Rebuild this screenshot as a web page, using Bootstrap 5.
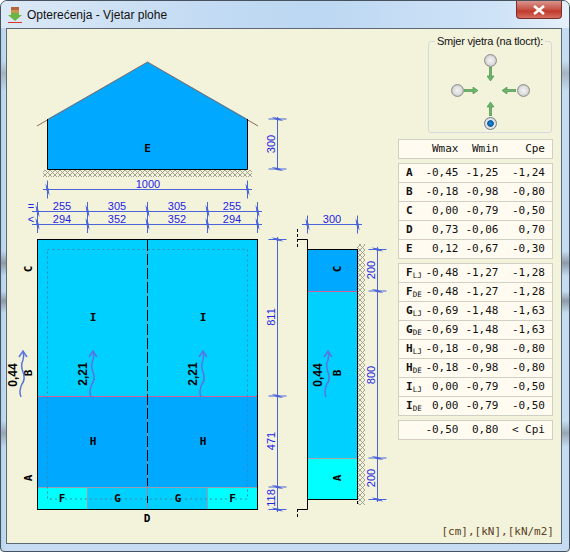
<!DOCTYPE html>
<html lang="hr">

<head>
  <meta charset="UTF-8">
  <meta name="viewport" content="width=device-width, initial-scale=1.0">
  <title>Opterećenja - Vjetar plohe</title>
  <link href="https://cdn.jsdelivr.net/npm/bootstrap@5.3.0/dist/css/bootstrap.min.css" rel="stylesheet">
  <style>
    html, body {
      margin: 0;
      height: 552px;
      overflow: hidden;
      background-color: #fff;
    }

    .prozor {
      width: 570px;
      height: 552px;
      border: 1px solid #47525e;
      border-radius: 7px 7px 4px 4px;
      background:
        linear-gradient(180deg, transparent 60px, #a6b4c2 72px, transparent 90px, transparent 250px, #8e9aa8 262px, transparent 275px, transparent 290px, #8e9aa8 300px, transparent 312px, transparent 420px, #98a6b4 432px, transparent 446px),
        linear-gradient(90deg, #b4d2ee 0, #c5dcf2 5px, #c5dcf2 100%);
      overflow: hidden;
    }

    .naslov {
      height: 27px;
      background: linear-gradient(90deg, #dce9f6 0, #c3dbf3 35%, #bcd7f2 55%, #cfe3f7 88%, #e6f0fa 100%);
      font: 12px "Liberation Sans", Arial, sans-serif;
      color: #111;
      padding-left: 6px;
    }

    .zatvori {
      width: 46px;
      height: 18px;
      margin-right: 7px;
      border: 1px solid #7a2d28;
      border-top: 0;
      border-radius: 0 0 4px 4px;
      background: linear-gradient(180deg, #d9958c 0, #c8584c 45%, #c13a2c 60%, #d56f60 100%);
    }

    .klijent {
      margin: 0 7px 0 5px;
      height: 516px;
      border: 1px solid #5c6873;
      background-color: #f3f3dc;
    }

    .crtez {
      display: block;
      width: 390px;
      height: 514px;
      flex: none;
    }

    .crtez text {
      font-family: "Liberation Sans", Arial, sans-serif;
    }

    .crtez .kota {
      font-size: 11px;
      fill: #2323e6;
      text-anchor: middle;
    }

    .crtez .slovo {
      font-family: "DejaVu Sans Mono", monospace;
      font-weight: 700;
      font-size: 11px;
      fill: #000;
      text-anchor: middle;
    }

    .crtez .sila {
      font-weight: 700;
      font-size: 12px;
      fill: #000;
      text-anchor: middle;
    }

    .strana {
      width: 154px;
      margin-left: 1px;
      padding: 5px 0 4px;
    }

    .smjer {
      width: 124px;
      height: 99px;
      margin: 0 0 6px 30px;
      padding: 0;
      border: 1px solid #d3d9dd;
      border-radius: 3px;
    }

    .smjer legend {
      float: none;
      width: auto;
      margin: 0 auto;
      padding: 0 2px;
      font: 11px/14px "Liberation Sans", Arial, sans-serif;
      letter-spacing: -0.2px;
      white-space: nowrap;
      color: #111;
    }

    .ruza {
      display: grid;
      grid-template-columns: 13px 16px 3px 15px 3px 16px 13px;
      grid-template-rows: 13px 15px 2px 13px 2px 18px 13px;
      place-items: center;
      width: 79px;
      margin: 0 auto;
      padding-top: 6px;
    }

    .ruza .form-check-input {
      width: 13px;
      height: 13px;
      margin: 0;
      float: none;
      border: 1px solid #8f8f8f;
      background: radial-gradient(circle, #f4f4f4 0, #dcdcdc 55%, #c4c4c4 70%, #fff 100%);
      box-shadow: none;
    }

    .ruza .form-check-input:checked {
      border-color: #6f7f8a;
      background: radial-gradient(circle, #1b8fe0 0, #0a5a9e 38%, #e8e8e8 48%, #c8c8c8 100%);
    }

    .ruza svg {
      display: block;
    }

    .tablica {
      --bs-table-bg: #fffbf0;
      --bs-table-color: #111;
      table-layout: fixed;
      width: 154px;
      margin: 0 0 4px;
      border: 1px solid #cfcfc4;
      font: 11px/14px "DejaVu Sans Mono", monospace;
    }

    .tablica td {
      height: 19px;
      padding: 0;
      border-bottom: 1px solid #cfcfc4;
      text-align: right;
      vertical-align: middle;
    }

    .tablica td:first-child {
      width: 26px;
      padding-left: 7px;
      text-align: left;
      font-weight: 700;
      white-space: nowrap;
    }

    .tablica td:nth-child(2) {
      width: 34px;
    }

    .tablica td:nth-child(3) {
      width: 40px;
    }

    .tablica td:nth-child(4) {
      width: 54px;
      padding-right: 7px;
    }

    .tablica sub {
      font-size: 7.5px;
      font-weight: 400;
      bottom: -0.2em;
      letter-spacing: 0;
    }

    .jedinice {
      margin-right: -2px;
      font: 11px/14px "DejaVu Sans Mono", monospace;
      color: #5a4020;
      text-align: right;
    }
  </style>
</head>

<body>

  <div class="prozor d-flex flex-column">
    <div class="naslov d-flex align-items-center flex-none">
      <svg width="16" height="18" viewBox="0 0 16 18" class="me-1">
        <rect x="4" y="1" width="8" height="3" fill="#b5653c"/>
        <rect x="4" y="4" width="8" height="3" fill="#c79a4a"/>
        <path d="M4 7h8v2h3l-7 6-7-6h3z" fill="#6cb544"/>
        <rect x="1" y="16" width="14" height="1" fill="#d8352a"/>
      </svg>
      <span>Opterećenja - Vjetar plohe</span>
      <div class="zatvori ms-auto d-flex align-items-center justify-content-center align-self-start">
        <svg width="14" height="10" viewBox="0 0 14 10">
          <path d="M2 1l10 8M12 1L2 9" stroke="#fff" stroke-width="2.6" fill="none"/>
        </svg>
      </div>
    </div>

    <div class="klijent d-flex">
      <svg class="crtez" viewBox="7 29 390 514">
        <defs>
          <pattern id="srafura" width="5" height="5" patternUnits="userSpaceOnUse">
            <rect width="5" height="5" fill="#f3f3dc"/>
            <path d="M0 0l2.500 2.500 2.500-2.500M0 5l2.500-2.500 2.500 2.500" stroke="#8d8d80" stroke-width="0.8" fill="none"/>
          </pattern>
          <g id="crtV">
            <path d="M-9 0H9" stroke="#4a63d8" stroke-width="1"/>
            <path d="M-6 -2L1 -1 6 2 -1 1z" fill="#4a63d8"/>
          </g>
          <g id="crtH">
            <path d="M0 -9V9" stroke="#4a63d8" stroke-width="1"/>
            <path d="M-2 -6L-1 1 2 6 1 -1z" fill="#4a63d8"/>
          </g>
          <g id="val">
            <path d="M0 0c-2 -5 -1 -9 1 -13c3 -4 3 -7 1 -12c-2 -5 -2 -8 0 -12c1 -3 1 -5 0 -9" fill="none" stroke="#5a74de" stroke-width="1.5"/>
            <path d="M-2 -40L2 -46 6 -40" fill="none" stroke="#5a74de" stroke-width="1.5"/>
          </g>
        </defs>

        <!-- presjek -->
        <path d="M47.5 119L147.5 62 247.5 119V169.500H47.500z" fill="#00a8ff"/>
        <path d="M37 126L147.500 62 258 126" fill="none" stroke="#8a6a60" stroke-width="1"/>
        <path d="M47.500 119V169.500H247.500V119" fill="none" stroke="#000" stroke-width="1"/>
        <rect x="43" y="170" width="209" height="7" fill="url(#srafura)"/>
        <text class="slovo" x="147.500" y="152">E</text>

        <path d="M277.500 117V170" stroke="#4a63d8"/>
        <use href="#crtV" x="277.500" y="119"/>
        <use href="#crtV" x="277.500" y="169"/>
        <text class="kota" transform="translate(276 144) rotate(-90)" y="-1">300</text>

        <path d="M43 189.500H252" stroke="#4a63d8"/>
        <use href="#crtH" x="47.500" y="189.500"/>
        <use href="#crtH" x="247.500" y="189.500"/>
        <text class="kota" x="148" y="188">1000</text>

        <path d="M32 211.500H262M32 224.500H262" stroke="#4a63d8"/>
        <g>
          <use href="#crtH" x="37.500" y="211"/><use href="#crtH" x="87.500" y="211"/>
          <use href="#crtH" x="147.500" y="211"/><use href="#crtH" x="207.500" y="211"/>
          <use href="#crtH" x="257.500" y="211"/>
          <use href="#crtH" x="37.500" y="224"/><use href="#crtH" x="87.500" y="224"/>
          <use href="#crtH" x="147.500" y="224"/><use href="#crtH" x="207.500" y="224"/>
          <use href="#crtH" x="257.500" y="224"/>
        </g>
        <text class="kota" x="31" y="210">=</text>
        <text class="kota" x="31" y="223">&lt;</text>
        <text class="kota" x="62" y="210">255</text>
        <text class="kota" x="117" y="210">305</text>
        <text class="kota" x="177" y="210">305</text>
        <text class="kota" x="232" y="210">255</text>
        <text class="kota" x="62" y="223">294</text>
        <text class="kota" x="117" y="223">352</text>
        <text class="kota" x="177" y="223">352</text>
        <text class="kota" x="232" y="223">294</text>

        <!-- tlocrt -->
        <rect x="37.500" y="239.500" width="220" height="157" fill="#00d0ff"/>
        <rect x="37.500" y="396" width="220" height="91" fill="#00a8ff"/>
        <rect x="37.500" y="487" width="50" height="22.500" fill="#00ffff"/>
        <rect x="87.500" y="487" width="120" height="22.500" fill="#00d0ff"/>
        <rect x="207.500" y="487" width="50" height="22.500" fill="#00ffff"/>
        <path d="M37.500 396.500H257.500" stroke="#d0609c"/>
        <path d="M37.500 487.500H257.500M87.500 487V509M207.500 487V509" stroke="#9a9ab0"/>
        <rect x="47.500" y="249.500" width="200" height="249.500" fill="none" stroke="#3a8aaa" stroke-dasharray="2 3"/>
        <path d="M147.500 240V509" stroke="#a080a0"/>
        <path d="M147.500 240V486M147.500 496V503" stroke="#000" stroke-width="1" stroke-dasharray="11 3"/>
        <rect x="37.500" y="239.500" width="220" height="270" fill="none" stroke="#000"/>

        <text class="slovo" x="93" y="321">I</text>
        <text class="slovo" x="203" y="321">I</text>
        <text class="slovo" x="93" y="445">H</text>
        <text class="slovo" x="203" y="445">H</text>
        <text class="slovo" x="62" y="502">F</text>
        <text class="slovo" x="117.500" y="502">G</text>
        <text class="slovo" x="178" y="502">G</text>
        <text class="slovo" x="232.500" y="502">F</text>
        <text class="slovo" x="147" y="522">D</text>
        <text class="slovo" transform="translate(31.500 269) rotate(-90)">C</text>
        <text class="slovo" transform="translate(31.500 373) rotate(-90)">B</text>
        <text class="slovo" transform="translate(31.500 478) rotate(-90)">A</text>

        <use href="#val" x="91" y="397"/>
        <use href="#val" x="201" y="397"/>
        <use href="#val" x="21" y="397"/>
        <text class="sila" transform="translate(87 374) rotate(-90)">2,21</text>
        <text class="sila" transform="translate(197 374) rotate(-90)">2,21</text>
        <text class="sila" transform="translate(17 375) rotate(-90)">0,44</text>

        <path d="M277.500 237V512" stroke="#4a63d8"/>
        <use href="#crtV" x="277.500" y="239.500"/>
        <use href="#crtV" x="277.500" y="396"/>
        <use href="#crtV" x="277.500" y="487"/>
        <use href="#crtV" x="277.500" y="509.500"/>
        <text class="kota" transform="translate(276 317) rotate(-90)" y="-1">811</text>
        <text class="kota" transform="translate(276 441) rotate(-90)" y="-1">471</text>
        <text class="kota" transform="translate(276 498) rotate(-90)" y="-1">118</text>

        <!-- bocni pogled -->
        <path d="M302 224.500H362" stroke="#4a63d8"/>
        <use href="#crtH" x="307.500" y="224.500"/>
        <use href="#crtH" x="357.500" y="224.500"/>
        <text class="kota" x="332" y="223">300</text>

        <rect x="307.500" y="249.500" width="50" height="42" fill="#00a8ff"/>
        <rect x="307.500" y="291" width="50" height="167" fill="#00d0ff"/>
        <rect x="307.500" y="458" width="50" height="41.500" fill="#00ffff"/>
        <rect x="357" y="244" width="8" height="261" fill="url(#srafura)"/>
        <path d="M307.500 291.500H357" stroke="#d0609c"/>
        <path d="M307.500 458.500H357" stroke="#a8a8a8"/>
        <path d="M297.500 239.500H307.500V499.500H357.500V249.500H307.500" fill="none" stroke="#000"/>
        <path d="M357.500 249V505" stroke="#000" stroke-dasharray="3 1"/>
        <path d="M307.500 499.500V509.500H297.500" fill="none" stroke="#000"/>
        <path d="M297.500 229V248M297.500 509V519" stroke="#000" stroke-dasharray="3 2"/>

        <text class="slovo" transform="translate(341 269) rotate(-90)">C</text>
        <text class="slovo" transform="translate(341 373) rotate(-90)">B</text>
        <text class="slovo" transform="translate(341 478) rotate(-90)">A</text>
        <use href="#val" x="326" y="397"/>
        <text class="sila" transform="translate(322 375) rotate(-90)">0,44</text>

        <path d="M377.500 247V502" stroke="#4a63d8"/>
        <use href="#crtV" x="377.500" y="249.500"/>
        <use href="#crtV" x="377.500" y="291"/>
        <use href="#crtV" x="377.500" y="458"/>
        <use href="#crtV" x="377.500" y="499.500"/>
        <text class="kota" transform="translate(376 270) rotate(-90)" y="-1">200</text>
        <text class="kota" transform="translate(376 375) rotate(-90)" y="-1">800</text>
        <text class="kota" transform="translate(376 478) rotate(-90)" y="-1">200</text>
      </svg>

      <div class="strana d-flex flex-column">
        <fieldset class="smjer">
          <legend>Smjer vjetra (na tlocrt):</legend>
          <div class="ruza">
            <input class="form-check-input" type="radio" name="smjer" style="grid-area: 1 / 4">
            <svg width="7" height="15" viewBox="0 0 7 15" style="grid-area: 2 / 4"><path d="M2.500 0h2v9h2.500l-3.500 5-3.500-5h2.500z" fill="#6cb56c" stroke="#3f8a3f" stroke-width="0.6"/></svg>
            <input class="form-check-input" type="radio" name="smjer" style="grid-area: 4 / 1">
            <svg width="15" height="7" viewBox="0 0 15 7" style="grid-area: 4 / 2"><path d="M0 2.500v2h9v2.500l5-3.500-5-3.500v2.500z" fill="#6cb56c" stroke="#3f8a3f" stroke-width="0.6"/></svg>
            <svg width="15" height="7" viewBox="0 0 15 7" style="grid-area: 4 / 6"><path d="M15 2.500v2h-9v2.500l-5-3.500 5-3.500v2.500z" fill="#6cb56c" stroke="#3f8a3f" stroke-width="0.6"/></svg>
            <input class="form-check-input" type="radio" name="smjer" style="grid-area: 4 / 7">
            <svg width="7" height="15" viewBox="0 0 7 15" style="grid-area: 6 / 4"><path d="M2.500 15h2v-9h2.500l-3.500-5-3.500 5h2.500z" fill="#6cb56c" stroke="#3f8a3f" stroke-width="0.6"/></svg>
            <input class="form-check-input" type="radio" name="smjer" style="grid-area: 7 / 4" checked>
          </div>
        </fieldset>

        <table class="table tablica">
          <tr><td></td><td>Wmax</td><td>Wmin</td><td>Cpe</td></tr>
        </table>
        <table class="table tablica">
          <tr><td>A</td><td>-0,45</td><td>-1,25</td><td>-1,24</td></tr>
          <tr><td>B</td><td>-0,18</td><td>-0,98</td><td>-0,80</td></tr>
          <tr><td>C</td><td>0,00</td><td>-0,79</td><td>-0,50</td></tr>
          <tr><td>D</td><td>0,73</td><td>-0,06</td><td>0,70</td></tr>
          <tr><td>E</td><td>0,12</td><td>-0,67</td><td>-0,30</td></tr>
        </table>
        <table class="table tablica">
          <tr><td>F<sub>LJ</sub></td><td>-0,48</td><td>-1,27</td><td>-1,28</td></tr>
          <tr><td>F<sub>DE</sub></td><td>-0,48</td><td>-1,27</td><td>-1,28</td></tr>
          <tr><td>G<sub>LJ</sub></td><td>-0,69</td><td>-1,48</td><td>-1,63</td></tr>
          <tr><td>G<sub>DE</sub></td><td>-0,69</td><td>-1,48</td><td>-1,63</td></tr>
          <tr><td>H<sub>LJ</sub></td><td>-0,18</td><td>-0,98</td><td>-0,80</td></tr>
          <tr><td>H<sub>DE</sub></td><td>-0,18</td><td>-0,98</td><td>-0,80</td></tr>
          <tr><td>I<sub>LJ</sub></td><td>0,00</td><td>-0,79</td><td>-0,50</td></tr>
          <tr><td>I<sub>DE</sub></td><td>0,00</td><td>-0,79</td><td>-0,50</td></tr>
        </table>
        <table class="table tablica">
          <tr><td></td><td>-0,50</td><td>0,80</td><td>&lt; Cpi</td></tr>
        </table>

        <div class="jedinice mt-auto">[cm],[kN],[kN/m2]</div>
      </div>
    </div>
  </div>

  <script src="https://cdn.jsdelivr.net/npm/bootstrap@5.3.0/dist/js/bootstrap.bundle.min.js"></script>
</body>

</html>
